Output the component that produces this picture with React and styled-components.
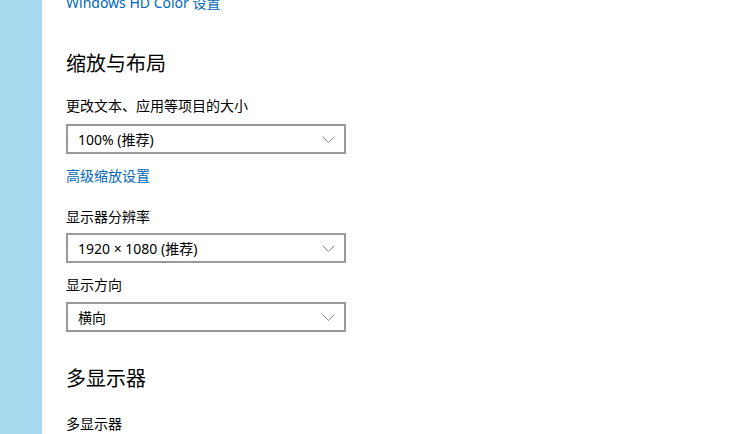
import React from "react";
import styled, { createGlobalStyle } from "styled-components";

const Global = createGlobalStyle`
  html, body { margin: 0; padding: 0; background: #fff; overflow: hidden; }
  body { font-family: "Noto Sans", "Noto Sans CJK SC", sans-serif; color: #000; }
`;

const Page = styled.div`
  display: flex;
  width: 729px;
  height: 434px;
  overflow: hidden;
`;

const Sidebar = styled.div`
  width: 42px;
  flex: none;
  background: #a8d9ee;
`;

const Main = styled.div`
  flex: 1;
  padding-left: 24px;
  margin-top: -7px;
  display: flex;
  flex-direction: column;
  align-items: flex-start;
`;

const Link = styled.a`
  font-size: 14px;
  line-height: 20px;
  color: #0067b8;
  text-decoration: none;
  margin-top: ${(p) => p.$mt || 0}px;
  cursor: pointer;
`;

const Heading = styled.h2`
  margin: ${(p) => p.$mt}px 0 0;
  font-size: 20px;
  line-height: 28px;
  font-weight: 400;
`;

const Label = styled.div`
  font-size: 14px;
  line-height: 20px;
  margin-top: ${(p) => p.$mt}px;
`;

const Select = styled.div`
  box-sizing: border-box;
  width: 280px;
  height: 32px;
  border: 2px solid #999;
  margin-top: ${(p) => p.$mt}px;
  display: flex;
  align-items: center;
  justify-content: space-between;
  padding: 0 9px 0 10px;
  font-size: 14px;
  color: #000;
`;

const Chevron = () => (
  <svg width="13" height="7" viewBox="0 0 13 7">
    <path d="M0.5 0.5 L6.5 6.5 L12.5 0.5" fill="none" stroke="#8c8c8c" strokeWidth="1" />
  </svg>
);

export default function App() {
  return (
    <>
      <Global />
      <Page>
        <Sidebar />
        <Main>
          <Link>Windows HD Color 设置</Link>
          <Heading $mt={37}>缩放与布局</Heading>
          <Label $mt={18}>更改文本、应用等项目的大小</Label>
          <Select $mt={8}>
            <span>100% (推荐)</span>
            <Chevron />
          </Select>
          <Link $mt={12}>高级缩放设置</Link>
          <Label $mt={21}>显示器分辨率</Label>
          <Select $mt={6}>
            <span>1920 × 1080 (推荐)</span>
            <Chevron />
          </Select>
          <Label $mt={12}>显示方向</Label>
          <Select $mt={7}>
            <span>横向</span>
            <Chevron />
          </Select>
          <Heading $mt={33}>多显示器</Heading>
          <Label $mt={21}>多显示器</Label>
        </Main>
      </Page>
    </>
  );
}
